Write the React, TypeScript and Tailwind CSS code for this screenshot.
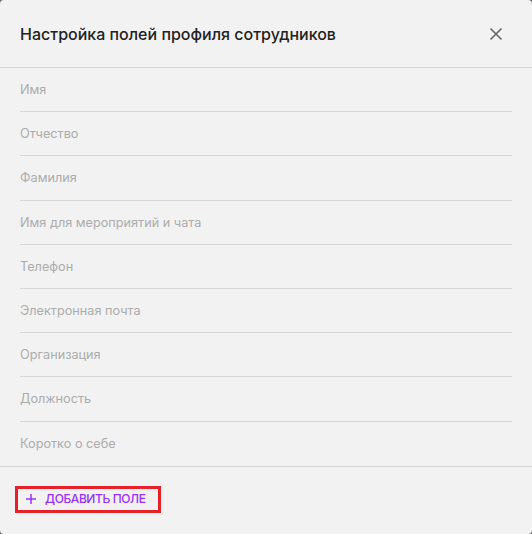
import React from "react";

const fields = [
  "Имя",
  "Отчество",
  "Фамилия",
  "Имя для мероприятий и чата",
  "Телефон",
  "Электронная почта",
  "Организация",
  "Должность",
  "Коротко о себе",
];

export default function App() {
  return (
    <div className="w-[532px] h-[534px] bg-[#6b6b6b] font-['Inter',sans-serif]">
      <div className="w-full h-full bg-[#f2f2f2] rounded-[4px] flex flex-col">
        <div className="h-[68px] shrink-0 flex items-center justify-between pl-5 pr-[24px] border-b border-[#d6d6d6]">
          <h2 className="text-[16px] font-medium text-[#222]">
            Настройка полей профиля сотрудников
          </h2>
          <button className="w-6 h-6 flex items-center justify-center text-[#666]">
            <svg width="14" height="14" viewBox="0 0 14 14" fill="none">
              <path d="M1.5 1.5 L12.5 12.5 M12.5 1.5 L1.5 12.5" stroke="currentColor" strokeWidth="1.6" />
            </svg>
          </button>
        </div>

        <div className="border-b border-[#d6d6d6]">
          {fields.map((f, i) => (
            <div
              key={f}
              className={
                "h-[44.2px] mx-5 flex items-center text-[12.7px] text-[#acacac] " +
                (i < fields.length - 1 ? "border-b border-[#d6d6d6]" : "")
              }
            >
              {f}
            </div>
          ))}
        </div>

        <div className="pt-[19px] pl-[15px]">
          <button className="h-[27px] w-[146px] border-[3px] border-[#e8202a] flex items-center pl-[8px] gap-[9px] text-[#9b30ff] text-[12px] font-medium tracking-[-0.4px]">
            <svg width="10" height="10" viewBox="0 0 10 10" fill="none">
              <path d="M5 0 V10 M0 5 H10" stroke="currentColor" strokeWidth="1.5" />
            </svg>
            ДОБАВИТЬ ПОЛЕ
          </button>
        </div>
      </div>
    </div>
  );
}
